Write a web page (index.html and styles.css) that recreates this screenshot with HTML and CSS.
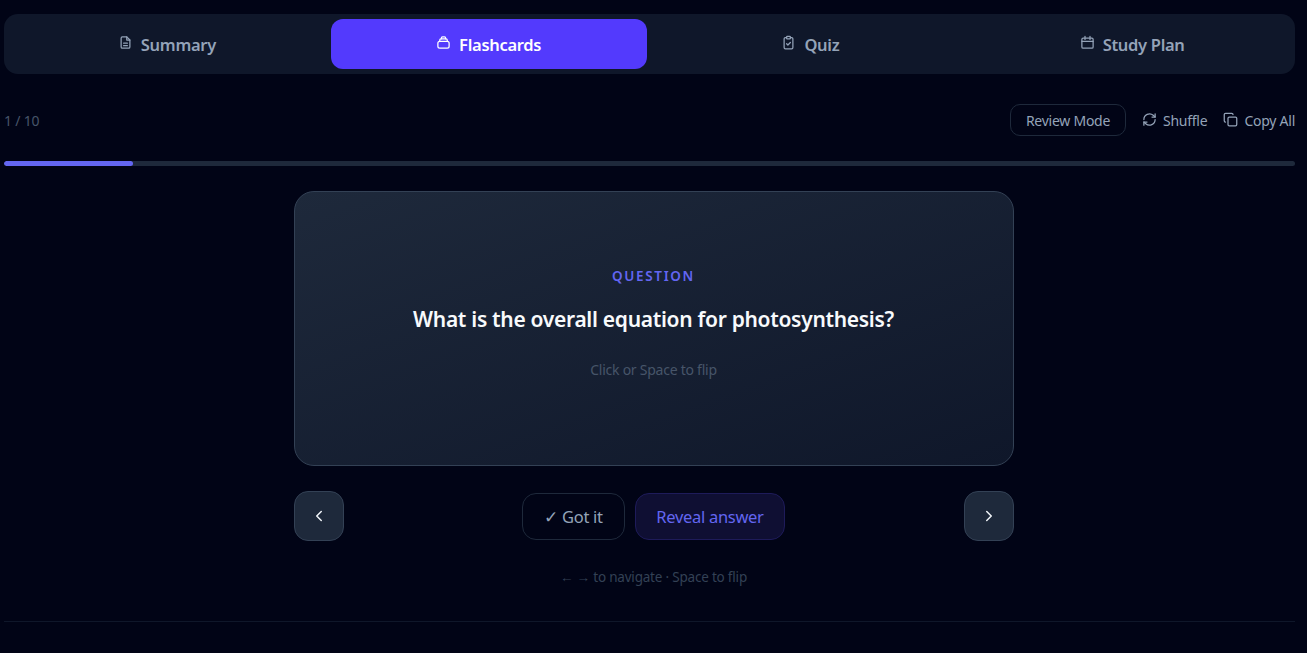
FILE: index.html
```html
<!DOCTYPE html>
<html lang="en">
<head>
<meta charset="utf-8">
<title>Flashcards</title>
<link rel="stylesheet" href="styles.css">
</head>
<body>
<main class="page">
  <nav class="tabs">
    <button class="tab">
      <svg class="tab-icon" viewBox="0 0 24 24"><path d="M14 3H7a2 2 0 0 0-2 2v14a2 2 0 0 0 2 2h10a2 2 0 0 0 2-2V8z"/><path d="M14 3v5h5"/><path d="M9 13h6M9 17h6"/></svg>
      <span>Summary</span>
    </button>
    <button class="tab tab-active">
      <svg class="tab-icon" viewBox="0 0 24 24"><rect x="3" y="10" width="18" height="11" rx="3"/><path d="M6 10V8a2 2 0 0 1 2-2h8a2 2 0 0 1 2 2v2"/><path d="M8.5 6V5a2 2 0 0 1 2-2h3a2 2 0 0 1 2 2v1"/></svg>
      <span>Flashcards</span>
    </button>
    <button class="tab">
      <svg class="tab-icon" viewBox="0 0 24 24"><rect x="9" y="2" width="6" height="4" rx="1"/><path d="M15 4h2a2 2 0 0 1 2 2v14a2 2 0 0 1-2 2H7a2 2 0 0 1-2-2V6a2 2 0 0 1 2-2h2"/><path d="m9 14 2 2 4-4"/></svg>
      <span>Quiz</span>
    </button>
    <button class="tab">
      <svg class="tab-icon" viewBox="0 0 24 24"><rect x="3" y="5" width="18" height="16" rx="2"/><path d="M8 2v5M16 2v5M3 10h18"/></svg>
      <span>Study Plan</span>
    </button>
  </nav>

  <div class="toolbar">
    <span class="counter">1 / 10</span>
    <div class="tools">
      <button class="review">Review Mode</button>
      <button class="tool">
        <svg class="tool-icon" viewBox="0 0 24 24"><path d="M3 12a9 9 0 0 1 15-6.7L21 8"/><path d="M21 3v5h-5"/><path d="M21 12a9 9 0 0 1-15 6.7L3 16"/><path d="M8 16H3v5"/></svg>
        <span>Shuffle</span>
      </button>
      <button class="tool">
        <svg class="tool-icon" viewBox="0 0 24 24"><rect x="8" y="8" width="14" height="14" rx="2"/><path d="M4 16a2 2 0 0 1-2-2V4a2 2 0 0 1 2-2h10a2 2 0 0 1 2 2"/></svg>
        <span>Copy All</span>
      </button>
    </div>
  </div>

  <div class="progress"><div class="progress-fill" style="width:10%"></div></div>

  <section class="study">
    <article class="card">
      <div class="card-label">QUESTION</div>
      <h2 class="card-question">What is the overall equation for photosynthesis?</h2>
      <div class="card-hint">Click or Space to flip</div>
    </article>

    <div class="controls">
      <button class="nav" aria-label="Previous">
        <svg class="nav-icon" viewBox="0 0 24 24"><path d="m15 18-6-6 6-6"/></svg>
      </button>
      <div class="actions">
        <button class="action">✓ Got it</button>
        <button class="action action-primary">Reveal answer</button>
      </div>
      <button class="nav" aria-label="Next">
        <svg class="nav-icon" viewBox="0 0 24 24"><path d="m9 18 6-6-6-6"/></svg>
      </button>
    </div>

    <p class="keys">← → to navigate · Space to flip</p>
  </section>

  <div class="rule"></div>
</main>
</body>
</html>
```
FILE: styles.css
```css
* { box-sizing: border-box; }

html, body {
  margin: 0;
  height: 100%;
  background: #010416;
  overflow: hidden;
}

body {
  font-family: "Noto Sans", "Open Sans", sans-serif;
  color: #94a3b8;
}

button {
  font: inherit;
  background: none;
  border: 0;
  padding: 0;
  color: inherit;
}

.page {
  padding: 14px 12px 0 4px;
}

.tabs {
  display: grid;
  grid-template-columns: repeat(4, 1fr);
  gap: 6px;
  height: 60px;
  padding: 5px;
  background: #0f172a;
  border-radius: 14px;
}

.tab {
  display: flex;
  align-items: center;
  justify-content: center;
  gap: 8px;
  border-radius: 12px;
  font-size: 16.5px;
  font-weight: 600;
  letter-spacing: -0.3px;
  color: #94a3b8;
}

.tab-active {
  background: #533afd;
  color: #fff;
}

.tab-icon {
  width: 15px;
  height: 15px;
  margin-top: -4px;
  fill: none;
  stroke: currentColor;
  stroke-width: 2;
  stroke-linecap: round;
  stroke-linejoin: round;
}

.toolbar {
  display: flex;
  align-items: center;
  justify-content: space-between;
  margin-top: 30px;
  height: 32px;
}

.counter {
  font-size: 14px;
  color: #475569;
  letter-spacing: -0.2px;
}

.tools {
  display: flex;
  align-items: center;
  gap: 16px;
}

.review {
  width: 116px;
  height: 32px;
  border: 1px solid #1e293b;
  border-radius: 10px;
  font-size: 14px;
  letter-spacing: -0.25px;
  color: #94a3b8;
}

.tool {
  display: flex;
  align-items: center;
  gap: 6px;
  font-size: 14px;
  letter-spacing: -0.25px;
  color: #94a3b8;
}

.tool-icon {
  width: 15px;
  height: 15px;
  margin-top: -2px;
  fill: none;
  stroke: currentColor;
  stroke-width: 2;
  stroke-linecap: round;
  stroke-linejoin: round;
}

.progress {
  height: 5px;
  margin-top: 25px;
  background: #1e293b;
  border-radius: 3px;
  overflow: hidden;
}

.progress-fill {
  height: 100%;
  background: #6366f1;
  border-radius: 3px;
}

.study {
  width: 720px;
  margin: 25px auto 0;
  position: relative;
  left: 4px;
}

.card {
  display: flex;
  flex-direction: column;
  align-items: center;
  height: 275px;
  padding-top: 73px;
  background: linear-gradient(160deg, #1e293b 0%, #0f172a 100%);
  border: 1px solid #334155;
  border-radius: 20px;
}

.card-label {
  font-size: 13.5px;
  line-height: 22px;
  font-weight: 600;
  letter-spacing: 1.65px;
  color: #6366f1;
}

.card-question {
  margin: 16px 0 0;
  font-size: 21px;
  line-height: 32px;
  font-weight: 600;
  letter-spacing: -0.3px;
  color: #f8fafc;
}

.card-hint {
  margin-top: 25px;
  font-size: 14px;
  line-height: 20px;
  letter-spacing: -0.25px;
  color: #475569;
}

.controls {
  display: flex;
  align-items: center;
  justify-content: space-between;
  margin-top: 25px;
}

.nav {
  display: flex;
  align-items: center;
  justify-content: center;
  width: 50px;
  height: 50px;
  background: #1e293b;
  border: 1px solid #334155;
  border-radius: 14px;
  color: #f1f5f9;
}

.nav-icon {
  width: 18px;
  height: 18px;
  fill: none;
  stroke: currentColor;
  stroke-width: 2;
  stroke-linecap: round;
  stroke-linejoin: round;
}

.actions {
  display: flex;
  gap: 10px;
}

.action {
  height: 47px;
  width: 103px;
  border: 1px solid #1e293b;
  border-radius: 14px;
  font-size: 16.5px;
  letter-spacing: -0.3px;
  color: #94a3b8;
}

.action-primary {
  width: 150px;
  background: #0f0f33;
  border-color: #1e1b5a;
  color: #6366f1;
}

.keys {
  margin: 26px 0 0;
  text-align: center;
  font-size: 13.5px;
  line-height: 20px;
  letter-spacing: -0.2px;
  color: #334155;
}

.rule {
  height: 1px;
  margin-top: 34px;
  background: #0f172a;
}
```
